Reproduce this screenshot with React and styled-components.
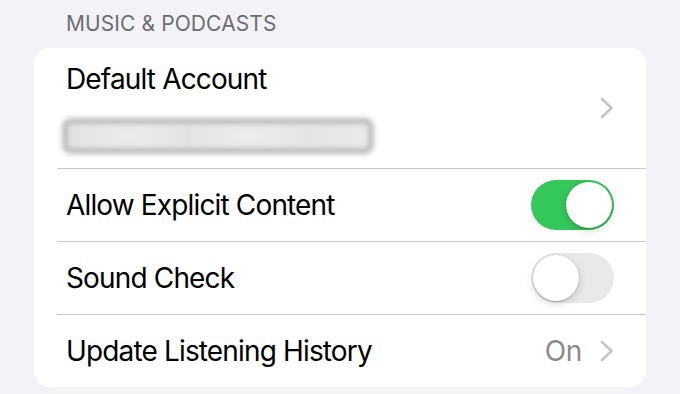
import React from "react";
import styled, { createGlobalStyle } from "styled-components";

const Global = createGlobalStyle`
  html, body { margin: 0; padding: 0; background: #f2f2f7; }
  body { font-family: Inter, "Liberation Sans", sans-serif; -webkit-font-smoothing: antialiased; }
`;

const Page = styled.div`
  width: 680px;
  height: 394px;
  box-sizing: border-box;
  padding: 0 34px;
  background: #f2f2f7;
  overflow: hidden;
`;

const SectionHeader = styled.div`
  height: 48px;
  box-sizing: border-box;
  padding: 11px 0 0 32px;
  font-size: 21px;
  line-height: 26px;
  color: #6d6d72;
  letter-spacing: 0.1px;
`;

const Card = styled.div`
  background: #fff;
  border-radius: 16px;
  overflow: hidden;
`;

const Row = styled.div`
  display: flex;
  align-items: center;
  margin-left: 23px;
  padding: 0 32px 0 9px;
  height: ${(p) => p.$h || 72}px;
  border-bottom: ${(p) => (p.$last ? "none" : "1px solid #c8c7cc")};
`;

const Stack = styled.div`
  flex: 1;
  align-self: stretch;
  display: flex;
  flex-direction: column;
  gap: 22px;
  padding-top: 14px;
`;

const Label = styled.div`
  flex: 1;
  font-size: 28px;
  line-height: 34px;
  color: #000;
  letter-spacing: -0.85px;
`;

const AccountLabel = styled(Label)`
  flex: none;
`;

const Blurred = styled.div`
  width: 312px;
  height: 36px;
  margin-left: -4px;
  box-sizing: border-box;
  border-radius: 9px;
  border: 6px solid #bcbcbc;
  background: linear-gradient(90deg, #e2e2e2, #ececec 20%, #e3e3e3 40%, #ededed 60%, #e4e4e4 80%, #eaeaea);
  filter: blur(2.5px);
`;

const Value = styled.span`
  font-size: 28px;
  color: #8a8a8e;
  margin-right: 18px;
  letter-spacing: -0.4px;
`;

const Toggle = styled.div`
  width: 83px;
  height: 50px;
  border-radius: 25px;
  background: ${(p) => (p.$on ? "#34c759" : "#e9e9ea")};
  padding: 2px;
  box-sizing: border-box;
  display: flex;
  justify-content: ${(p) => (p.$on ? "flex-end" : "flex-start")};
`;

const Knob = styled.div`
  width: 46px;
  height: 46px;
  border-radius: 50%;
  background: #fff;
  box-shadow: 0 3px 8px rgba(0, 0, 0, 0.15), 0 1px 1px rgba(0, 0, 0, 0.16), 0 0 0 1px rgba(0,0,0,0.04);
`;

const Chevron = () => (
  <svg width="14" height="22" viewBox="0 0 14 22" style={{ display: "block", flexShrink: 0 }}>
    <polyline points="2,2 11.5,11 2,20" fill="none" stroke="#c4c4c7" strokeWidth="2.6" strokeLinecap="round" strokeLinejoin="round" />
  </svg>
);

export default function App() {
  return (
    <Page>
      <Global />
      <SectionHeader>MUSIC &amp; PODCASTS</SectionHeader>
      <Card>
        <Row $h={120}>
          <Stack>
            <AccountLabel>Default Account</AccountLabel>
            <Blurred />
          </Stack>
          <Chevron />
        </Row>
        <Row>
          <Label>Allow Explicit Content</Label>
          <Toggle $on><Knob /></Toggle>
        </Row>
        <Row>
          <Label>Sound Check</Label>
          <Toggle><Knob /></Toggle>
        </Row>
        <Row $last>
          <Label>Update Listening History</Label>
          <Value>On</Value>
          <Chevron />
        </Row>
      </Card>
    </Page>
  );
}
